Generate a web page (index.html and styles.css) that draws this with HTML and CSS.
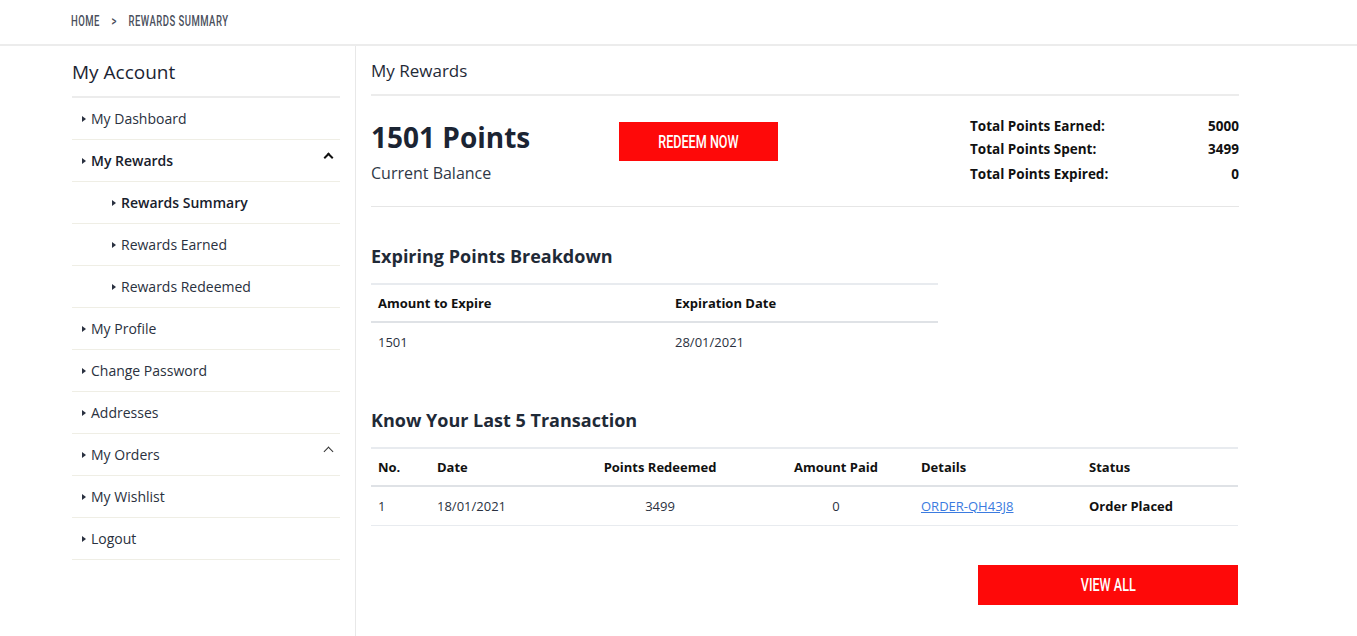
FILE: index.html
```html
<!DOCTYPE html>
<html>
<head>
<meta charset="utf-8">
<link rel="stylesheet" href="styles.css">
</head>
<body>
<header class="topbar">
  <nav class="crumbs"><span>Home</span><span class="sep">&gt;</span><span>Rewards Summary</span></nav>
</header>
<div class="page">
  <aside class="sidebar">
    <h2 class="side-title">My Account</h2>
    <ul class="menu">
      <li class="item"><span class="tri"></span>My Dashboard</li>
      <li class="item bold"><span class="tri"></span>My Rewards<span class="chev chev-bold"></span></li>
      <li class="item sub bold"><span class="tri"></span>Rewards Summary</li>
      <li class="item sub"><span class="tri"></span>Rewards Earned</li>
      <li class="item sub"><span class="tri"></span>Rewards Redeemed</li>
      <li class="item"><span class="tri"></span>My Profile</li>
      <li class="item"><span class="tri"></span>Change Password</li>
      <li class="item"><span class="tri"></span>Addresses</li>
      <li class="item"><span class="tri"></span>My Orders<span class="chev"></span></li>
      <li class="item"><span class="tri"></span>My Wishlist</li>
      <li class="item"><span class="tri"></span>Logout</li>
    </ul>
  </aside>
  <main class="main">
    <h1 class="main-title">My Rewards</h1>
    <section class="summary">
      <div class="balance">
        <div class="points">1501 Points</div>
        <div class="balance-label">Current Balance</div>
      </div>
      <div class="redeem-wrap"><button class="btn btn-redeem"><span class="cond">Redeem Now</span></button></div>
      <dl class="totals">
        <div class="trow"><dt>Total Points Earned:</dt><dd>5000</dd></div>
        <div class="trow"><dt>Total Points Spent:</dt><dd>3499</dd></div>
        <div class="trow last"><dt>Total Points Expired:</dt><dd>0</dd></div>
      </dl>
    </section>
    <h3 class="sec-title">Expiring Points Breakdown</h3>
    <table class="tbl tbl-expire">
      <thead><tr><th class="c-amt">Amount to Expire</th><th>Expiration Date</th></tr></thead>
      <tbody><tr><td>1501</td><td>28/01/2021</td></tr></tbody>
    </table>
    <h3 class="sec-title sec-title-2">Know Your Last 5 Transaction</h3>
    <table class="tbl tbl-trans">
      <thead><tr>
        <th class="t-no">No.</th><th class="t-date">Date</th><th class="t-pts">Points Redeemed</th><th class="t-paid">Amount Paid</th><th class="t-det">Details</th><th>Status</th>
      </tr></thead>
      <tbody><tr>
        <td>1</td><td>18/01/2021</td><td class="t-pts">3499</td><td class="t-paid">0</td><td><a href="#" class="link">ORDER-QH43J8</a></td><td class="status">Order Placed</td>
      </tr></tbody>
    </table>
    <div class="actions"><button class="btn btn-all"><span class="cond">View All</span></button></div>
  </main>
</div>
</body>
</html>
```

FILE: styles.css
```css
* { box-sizing: border-box; }
html, body { margin: 0; padding: 0; background: #fff; }
body {
  font-family: "Open Sans", "Noto Sans", sans-serif;
  color: #1f2a37;
  width: 1357px;
  height: 636px;
  overflow: hidden;
}
.topbar {
  height: 46px;
  border-bottom: 2px solid #ececec;
  padding-left: 71px;
  display: flex;
  align-items: center;
}
.crumbs {
  font-family: Roboto, "DejaVu Sans", sans-serif;
  font-weight: 500;
  text-transform: uppercase;
  font-size: 14px;
  letter-spacing: 0.7px;
  color: #4a4f5c;
  display: flex;
  gap: 13px;
  margin-top: -2px;
  transform: scaleX(0.68);
  transform-origin: left center;
}
.crumbs .sep { padding: 0 4px; }
.page {
  display: flex;
  height: 590px;
}
.sidebar {
  width: 356px;
  padding-left: 72px;
  padding-right: 15px;
  border-right: 1px solid #e8e8e8;
}
.side-title {
  font-size: 19px;
  font-weight: 400;
  margin: 0;
  height: 52px;
  line-height: 50px;
  padding-top: 1px;
  color: #1b2433;
  border-bottom: 2px solid #ececec;
}
.menu { list-style: none; margin: 0; padding: 0; }
.item {
  height: 42px;
  border-bottom: 1px solid #efeee5;
  display: flex;
  align-items: center;
  padding-left: 10px;
  font-size: 14px;
  color: #2a3140;
  position: relative;
}
.item.bold { font-weight: 600; color: #17202c; }
.item.sub { padding-left: 40px; }
.tri {
  width: 0; height: 0;
  border-top: 3.5px solid transparent;
  border-bottom: 3.5px solid transparent;
  border-left: 4px solid #2a3140;
  margin-right: 5px;
}
.chev {
  margin-left: auto;
  margin-right: 8px;
  width: 7px; height: 7px;
  border-left: 1.5px solid #333;
  border-top: 1.5px solid #333;
  transform: rotate(45deg);
  margin-top: -6px;
}
.chev-bold { border-width: 2px; border-color: #111; }
.main {
  width: 883px;
  padding-left: 15px;
}
.main-title {
  font-size: 17px;
  font-weight: 400;
  margin: 0;
  height: 50px;
  line-height: 50px;
  color: #1f2a37;
  border-bottom: 2px solid #ececec;
}
.summary {
  display: flex;
  height: 111px;
  border-bottom: 1px solid #e6e6e6;
}
.balance { width: 248px; padding-top: 22px; }
.points {
  font-size: 28px;
  font-weight: 700;
  line-height: 38px;
  color: #1b2433;
}
.balance-label { font-size: 16px; color: #2f3847; margin-top: 5px; line-height: 24px; }
.redeem-wrap { padding-top: 26px; }
.btn {
  font-family: Roboto, "DejaVu Sans", sans-serif;
  font-weight: 500;
  text-transform: uppercase;
  color: #fff;
  background: #fe0909;
  border: none;
  font-size: 18px;
  cursor: pointer;
  padding: 0;
  display: flex;
  align-items: center;
  justify-content: center;
}
.cond { display: inline-block; transform: scaleX(0.7); white-space: nowrap; }
.btn-redeem { width: 159px; height: 39px; }
.totals {
  margin: 0 0 0 auto;
  width: 269px;
  padding-top: 19px;
}
.trow {
  display: flex;
  justify-content: space-between;
  font-size: 13.5px;
  font-weight: 700;
  line-height: 23px;
  color: #111;
}
.trow.last { margin-top: 2px; }
.trow dt, .trow dd { margin: 0; }
.sec-title {
  font-size: 18px;
  font-weight: 700;
  margin: 0;
  padding-top: 36px;
  height: 76px;
  line-height: 26px;
  color: #1f2a37;
}
.sec-title-2 { padding-top: 46px; height: 86px; }
.tbl {
  border-collapse: collapse;
  font-size: 13px;
  color: #2a3140;
}
.tbl th {
  text-align: left;
  font-weight: 700;
  color: #111;
  height: 38px;
  padding: 0 7px;
  border-top: 2px solid #e8ebef;
  border-bottom: 2px solid #dfe2e6;
}
.tbl td { height: 39px; padding: 0 7px; }
.tbl-expire { width: 567px; }
.tbl-expire .c-amt { width: 297px; }
.tbl-trans { width: 867px; }
.tbl-trans td { border-bottom: 1px solid #e8ebef; }
.t-no { width: 59px; }
.t-date { width: 150px; }
.tbl-trans .t-pts { width: 160px; text-align: center; }
.tbl-trans .t-paid { width: 174px; text-align: center; padding-left: 25px; }
.t-det { width: 168px; }
.link { color: #3b7be0; text-decoration: underline; }
.status { font-weight: 700; color: #111; }
.actions { display: flex; justify-content: flex-end; padding-top: 39px; width: 867px; }
.btn-all { width: 260px; height: 40px; font-size: 18px; }
```
